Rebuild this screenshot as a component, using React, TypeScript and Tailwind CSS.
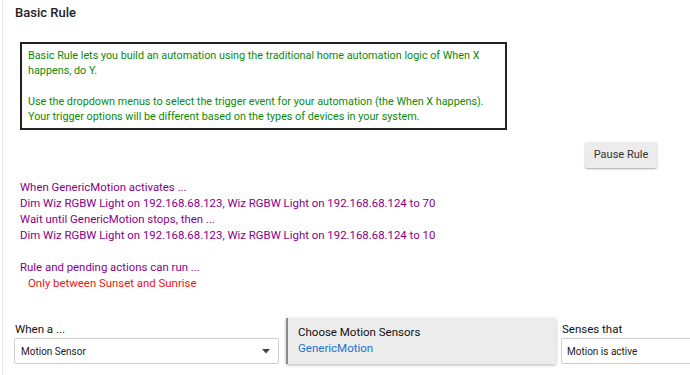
import * as React from 'react';

const font = { fontFamily: 'Roboto, "Liberation Sans", sans-serif' };

function Caret() {
  return (
    <svg width="8" height="5" viewBox="0 0 8 5" className="shrink-0">
      <path d="M0 0 L8 0 L4 4.5 Z" fill="#444" />
    </svg>
  );
}

export default function App() {
  return (
    <div style={font} className="w-[690px] h-[375px] overflow-hidden bg-white">
      <div className="ml-[2px] h-full border-l border-[#e3e3e3] pl-[12px]">
        {/* heading */}
        <div className="h-[42px] pt-[3px] text-[13px] font-medium text-[#222] leading-[20px]">Basic Rule</div>

        {/* description box */}
        <div className="ml-[5px] w-[487px] border-2 border-[#222] px-[6px] py-[4px] text-[10.8px] leading-[15.3px] text-[#0a8a0a]">
          Basic Rule lets you build an automation using the traditional home automation logic of When X
          <br />
          happens, do Y.
          <br />
          <br />
          Use the dropdown menus to select the trigger event for your automation (the When X happens).
          <br />
          Your trigger options will be different based on the types of devices in your system.
        </div>

        {/* pause button */}
        <div className="flex justify-end pr-[33px] mt-[12px]">
          <button className="h-[26px] w-[72px] rounded-[2px] bg-[#ececec] text-[11px] text-[#333] shadow-[0_1px_2px_rgba(0,0,0,0.35)]">
            Pause Rule
          </button>
        </div>

        {/* rule summary */}
        <div className="mt-[11px] ml-[5px] text-[11.4px] leading-[16px] text-[#880088]">
          <div>When GenericMotion activates ...</div>
          <div>Dim Wiz RGBW Light on 192.168.68.123, Wiz RGBW Light on 192.168.68.124 to 70</div>
          <div>Wait until GenericMotion stops, then ...</div>
          <div>Dim Wiz RGBW Light on 192.168.68.123, Wiz RGBW Light on 192.168.68.124 to 10</div>
          <div className="h-[16px]" />
          <div>Rule and pending actions can run ...</div>
          <div className="pl-[8px] text-[#f01010]">Only between Sunset and Sunrise</div>
        </div>

        {/* trigger row */}
        <div className="mt-[27px] -ml-[1px] flex items-end w-[700px]">
          <div className="w-[265px]">
            <div className="pl-[1px] text-[11.5px] leading-[16px] text-[#111] mb-[1px]">When a ...</div>
            <div className="h-[26px] border border-[#cfcfcf] rounded-[2px] flex items-center justify-between pl-[6px] pr-[8px] text-[10px] text-[#222]">
              <span>Motion Sensor</span>
              <Caret />
            </div>
          </div>
          <div className="ml-[7px] w-[270px] h-[46px] bg-[#ececec] border-l-2 border-[#8c8c8c] shadow-[0_1px_3px_rgba(0,0,0,0.3)] pl-[10px] pt-[6px] text-[11.5px] leading-[16px]">
            <div className="text-[#111]">Choose Motion Sensors</div>
            <div className="text-[#1a73d0]">GenericMotion</div>
          </div>
          <div className="ml-[5px] w-[140px]">
            <div className="pl-[1px] text-[11.5px] leading-[16px] text-[#111] mb-[1px]">Senses that</div>
            <div className="h-[26px] border border-[#cfcfcf] rounded-[2px] flex items-center pl-[5px] text-[10px] text-[#222]">
              Motion is active
            </div>
          </div>
        </div>
      </div>
    </div>
  );
}
